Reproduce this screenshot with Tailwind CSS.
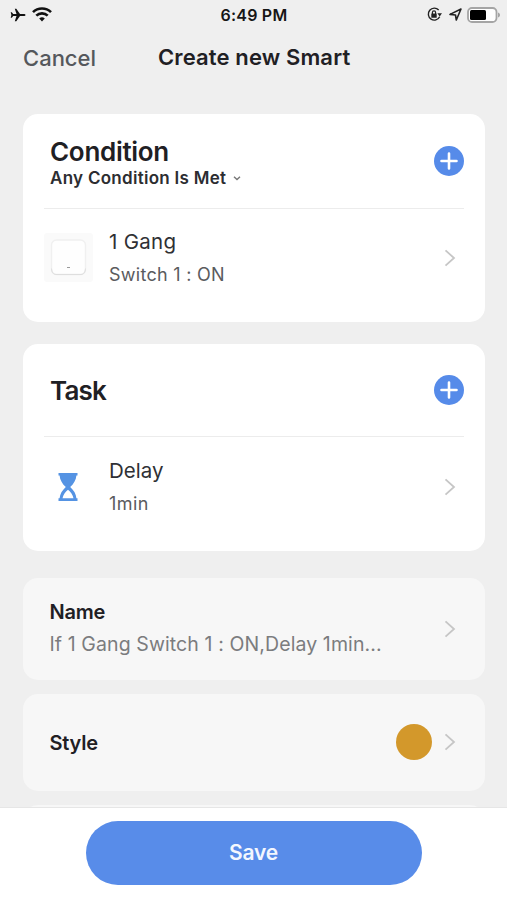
<!DOCTYPE html>
<html lang="en">
<head>
<meta charset="utf-8">
<title>Create new Smart</title>
<script src="https://cdn.jsdelivr.net/npm/@tailwindcss/browser@4"></script>
</head>
<body class="bg-[#efefef]">
<div class="flex flex-col w-[507px] h-[900px] overflow-hidden bg-[#efefef] font-['Inter',sans-serif] text-[#1f2024] whitespace-nowrap">
  <header class="shrink-0">
    <div class="grid grid-cols-3 items-center h-[29px] pl-[10px] pr-[7px] text-black">
      <div class="flex items-center gap-[6px]">
        <svg class="w-[16px] h-[14px]" viewBox="0 0 16 14" fill="#111"><path d="M15.5 7c0-.8-.8-1.100-1.700-1.100H10L6.300.8H4.800l1.700 5.100H3.200L1.800 4.300H.7L1.400 7 .7 9.700h1.100l1.400-1.600h3.300l-1.700 5.100h1.500L10 8.100h3.800c.9 0 1.700-.3 1.700-1.100z"/></svg>
        <svg class="w-[20px] h-[15px]" viewBox="0 0 20 15"><g fill="none" stroke="#111" stroke-width="2.600"><path d="M1 5.200a12.800 12.800 0 0 1 18 0"/><path d="M4.300 8.700a8.100 8.100 0 0 1 11.400 0"/></g><path d="M7.200 11.500a4 4 0 0 1 5.600 0L10 14.400z" fill="#111"/></svg>
      </div>
      <div class="text-center text-[16px] font-semibold tracking-[0.2px] pr-[2px] text-[#161616]">6:49 PM</div>
      <div class="flex items-center justify-end">
        <svg class="w-[15px] h-[15px] mr-[7px]" viewBox="0 0 15 15"><path d="M11.700 3A6 6 0 1 0 12.700 9.800" fill="none" stroke="#222" stroke-width="1.400"/><path d="M10.400 6.200h4.600l-2.300 3.200z" fill="#222"/><rect x="4.300" y="6.500" width="5.400" height="4.300" rx=".6" fill="#222"/><path d="M5.400 7V5.500a1.600 1.600 0 0 1 3.200 0V7" fill="none" stroke="#222" stroke-width="1.200"/></svg>
        <svg class="w-[13px] h-[13px] mr-[5px]" viewBox="0 0 13 13"><path d="M1 6.400 12 1 7.300 12l-.8-5z" fill="none" stroke="#222" stroke-width="1.600" stroke-linejoin="round"/></svg>
        <svg class="w-[33px] h-[16px]" viewBox="0 0 33 16"><rect x="1" y="1" width="28.500" height="14" rx="4" fill="#fff" stroke="#a5a5a5" stroke-width="1.800"/><rect x="3" y="3" width="16" height="10" rx="1.500" fill="#000"/><path d="M31 5.500c1.300.4 2 1.300 2 2.500s-.7 2.100-2 2.500z" fill="#a5a5a5"/></svg>
      </div>
    </div>
    <div class="grid grid-cols-[135px_1fr_134px] items-center h-[57px] pl-[23px]">
      <button class="text-left text-[22px] font-medium text-[#55585c] pt-[2px]">Cancel</button>
      <h1 class="text-[22px] font-semibold tracking-[0.13px]">Create new Smart</h1>
    </div>
  </header>

  <main class="flex flex-col flex-1 min-h-0 overflow-hidden px-[22.500px] pt-[27.500px]">
    <section class="shrink-0 h-[208px] rounded-[15px] bg-white pl-[21px] pr-[21px]">
      <div class="flex items-center justify-between h-[95px] pl-[6.500px] border-b border-[#ececec]">
        <div class="pt-[5px]">
          <h2 class="text-[26px] leading-[30px] font-semibold tracking-[-0.3px]">Condition</h2>
          <div class="flex items-center text-[17px] leading-[22px] font-semibold tracking-[0.28px] text-[#2c2d31]">Any Condition Is Met
            <svg class="w-[8px] h-[5px] ml-[7px]" viewBox="0 0 8 5" fill="none" stroke="#777" stroke-width="1.400"><path d="M1 .8 4 3.600 7 .8"/></svg>
          </div>
        </div>
        <svg class="w-[30px] h-[30px]" viewBox="0 0 30 30"><circle cx="15" cy="15" r="15" fill="#568be9"/><path d="M15 7.500v15M7.500 15h15" stroke="#fff" stroke-width="2.600" stroke-linecap="round"/></svg>
      </div>
      <div class="flex items-center h-[98px]">
        <div class="flex items-center justify-center w-[49px] h-[49px] bg-[#fafafa] rounded-[3px]">
          <svg class="w-[37px] h-[37px]" viewBox="0 0 37 37"><rect x="1.500" y="1" width="34" height="34.500" rx="5" fill="#fefefe" stroke="#f0f0f0" stroke-width="1.400"/><path d="M1.500 29.500c.3 4 2 6 4.500 6h25c2.500 0 4.200-2 4.500-6" fill="none" stroke="#dedede"/><path d="M17 28.500h3" stroke="#999"/></svg>
        </div>
        <div class="flex-1 pl-[16.500px] pt-[1px]">
          <div class="text-[20.500px] leading-[32px] tracking-[0.3px] text-[#2f3034]">1 Gang</div>
          <div class="text-[18px] leading-[33px] tracking-[0.28px] text-[#5a5b5e]">Switch 1 : ON</div>
        </div>
        <svg class="w-[12px] h-[18px] mr-[8px]" viewBox="0 0 12 18" fill="none" stroke="#c6c6c6" stroke-width="1.800"><path d="M1.500 1.300 10 9l-8.500 7.700"/></svg>
      </div>
    </section>

    <section class="shrink-0 mt-[22px] h-[207px] rounded-[15px] bg-white pl-[21px] pr-[21px]">
      <div class="flex items-center justify-between h-[93.500px] pl-[6.500px] border-b border-[#ececec]">
        <h2 class="text-[26px] font-semibold tracking-[-0.8px] pt-[1px]">Task</h2>
        <svg class="w-[30px] h-[30px]" viewBox="0 0 30 30"><circle cx="15" cy="15" r="15" fill="#568be9"/><path d="M15 7.500v15M7.500 15h15" stroke="#fff" stroke-width="2.600" stroke-linecap="round"/></svg>
      </div>
      <div class="flex items-center h-[99px]">
        <div class="flex items-center justify-center w-[49px] h-[49px]">
          <svg class="w-[20px] h-[28px]" viewBox="0 0 20 28" fill="#5593e3"><path d="M.5 0h19v2.400h-1.100c-.4 4.400-2.400 8-6.200 11.600 3.800 3.600 5.800 7 6.200 11.200h1.100V28H.5v-2.800h1.100c.4-4.200 2.400-7.600 6.200-11.200C4 10.400 2 6.800 1.600 2.400H.5zM10 16.800c-2.800 2.400-4.700 5-5.500 8.400h11c-.8-3.400-2.700-6-5.500-8.400z" fill-rule="evenodd"/></svg>
        </div>
        <div class="flex-1 pl-[16.500px] pt-[2px]">
          <div class="text-[20.500px] leading-[32px] text-[#2f3034]">Delay</div>
          <div class="text-[18px] leading-[33px] tracking-[0.4px] text-[#5a5b5e]">1min</div>
        </div>
        <svg class="w-[12px] h-[18px] mr-[8px]" viewBox="0 0 12 18" fill="none" stroke="#c6c6c6" stroke-width="1.800"><path d="M1.500 1.300 10 9l-8.500 7.700"/></svg>
      </div>
    </section>

    <section class="shrink-0 flex items-center justify-between mt-[27.500px] h-[102px] rounded-[15px] bg-[#f7f7f7] pl-[27px] pr-[29px]">
      <div class="pb-[2px]">
        <h3 class="text-[20px] leading-[32px] font-semibold tracking-[-0.2px]">Name</h3>
        <p class="text-[19.500px] leading-[32px] tracking-[0.1px] text-[#7b7c7e]">If 1 Gang Switch 1 : ON,Delay 1min...</p>
      </div>
      <svg class="w-[12px] h-[18px]" viewBox="0 0 12 18" fill="none" stroke="#c6c6c6" stroke-width="1.800"><path d="M1.500 1.300 10 9l-8.500 7.700"/></svg>
    </section>

    <section class="shrink-0 flex items-center mt-[14px] h-[97px] rounded-[15px] bg-[#f7f7f7] pl-[27px] pr-[29px] pb-[1px]">
      <h3 class="flex-1 text-[20px] font-semibold tracking-[-0.2px] pt-[1px]">Style</h3>
      <span class="w-[36px] h-[36px] rounded-full bg-[#d3982b] mr-[12px]"></span>
      <svg class="w-[12px] h-[18px]" viewBox="0 0 12 18" fill="none" stroke="#c6c6c6" stroke-width="1.800"><path d="M1.500 1.300 10 9l-8.500 7.700"/></svg>
    </section>

    <section class="shrink-0 mt-[14px] h-[97px] rounded-[15px] bg-[#f7f7f7]"></section>
  </main>

  <footer class="shrink-0 h-[93px] bg-white border-t border-[#e6e6e6] pt-[13px]">
    <button class="flex items-center justify-center mx-auto w-[336px] h-[64px] rounded-full bg-[#588ce9] text-[21px] font-semibold tracking-[-0.2px] text-[#f4f7fe]">Save</button>
  </footer>
</div>
</body>
</html>
